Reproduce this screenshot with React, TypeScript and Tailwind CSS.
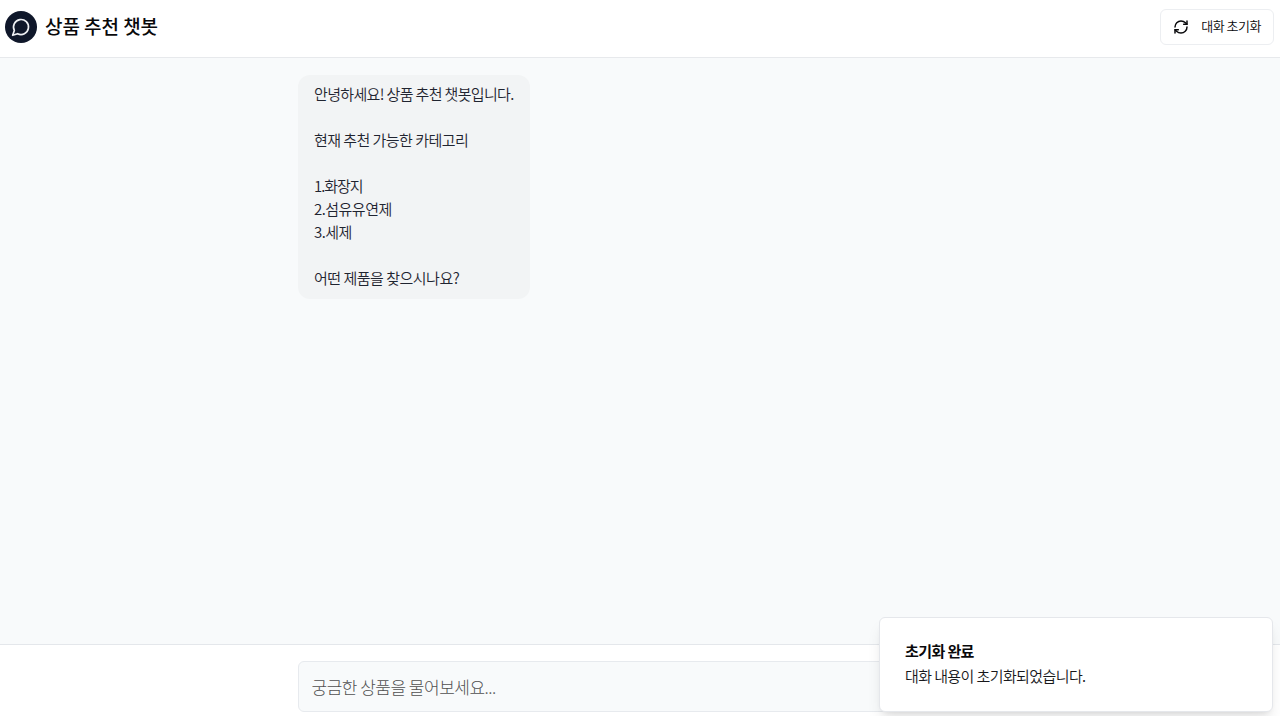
import { RefreshCw } from 'lucide-react'

const GREETING = [
  '안녕하세요! 상품 추천 챗봇입니다.',
  '',
  '현재 추천 가능한 카테고리',
  '',
  '1.화장지',
  '2.섬유유연제',
  '3.세제',
  '',
  '어떤 제품을 찾으시나요?',
]

function ChatIcon() {
  return (
    <svg
      className="size-5 text-[#eef0f4]"
      viewBox="0 0 24 24"
      fill="none"
      stroke="currentColor"
      strokeWidth={2}
      strokeLinecap="round"
      strokeLinejoin="round"
    >
      <path d="M7.9 20A9 9 0 1 0 4 16.1L2 22Z" />
    </svg>
  )
}

function Header() {
  return (
    <header className="flex h-[58px] shrink-0 items-start justify-between border-b border-[#e7e9ec] bg-white pr-[6px] pl-[5px]">
      <div className="mt-[11px] flex h-8 items-center gap-2">
        <div className="flex size-8 items-center justify-center rounded-full bg-[#0f172a]">
          <ChatIcon />
        </div>
        <h1 className="pb-[4px] text-[19px] leading-none font-medium tracking-[-0.05px] text-[#09090b]">상품 추천 챗봇</h1>
      </div>
      <button className="mt-[9px] flex h-9 w-[114px] items-center justify-between rounded-md border border-[#eceef1] bg-white px-[12px] text-[13px] tracking-[-0.5px] text-[#09090b]">
        <RefreshCw className="size-4" strokeWidth={2.2} />
        <span className="pb-[2px] font-[350]">대화 초기화</span>
      </button>
    </header>
  )
}

function BotMessage({ lines }: { lines: string[] }) {
  return (
    <div className="w-[232px] rounded-xl bg-[#f2f4f5] px-4 pt-[6.6px] pb-[9.4px] text-[15px] leading-[23.1px] font-[350] tracking-[-0.5px] whitespace-pre text-[#1f2430]">
      {lines.map((line, i) => (
        <p key={i} className="h-[23.1px] first:tracking-[-0.65px] nth-[3]:tracking-[-0.55px] nth-[5]:tracking-[-1px]">
          {line}
        </p>
      ))}
    </div>
  )
}

function Toast({ title, description }: { title: string; description: string }) {
  return (
    <div className="absolute right-[7px] bottom-1 flex h-[95px] w-[394px] flex-col justify-center rounded-md border border-[#e5e7eb] bg-white px-[25px] pb-1 shadow-lg">
      <div className="text-[15px] leading-[23px] font-bold tracking-[-0.6px] text-[#09090b]">{title}</div>
      <div className="mt-[2px] text-[15px] leading-[23px] font-[350] tracking-[-0.6px] text-[#18181b]">{description}</div>
    </div>
  )
}

export default function App() {
  return (
    <div className="relative flex h-screen flex-col overflow-hidden bg-[#f8fafb] font-['Noto_Sans_CJK_KR',sans-serif]">
      <Header />
      <main className="min-h-0 flex-1 pt-[17px]">
        <div className="mx-auto w-[684px]">
          <BotMessage lines={GREETING} />
        </div>
      </main>
      <footer className="h-[72px] shrink-0 border-t border-[#e4e7eb] bg-white pt-4">
        <div className="mx-auto w-[685px]">
          <input
            className="h-[51px] w-full rounded-md border border-[#e7eaee] bg-[#f8fafb] px-[13px] text-[17px] font-light tracking-[-0.5px] placeholder:text-[#505050]"
            placeholder="궁금한 상품을 물어보세요..."
          />
        </div>
      </footer>
      <Toast title="초기화 완료" description="대화 내용이 초기화되었습니다." />
    </div>
  )
}
